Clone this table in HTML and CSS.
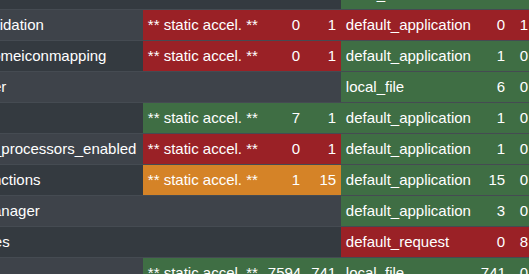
FILE: index.html
```html
<!DOCTYPE html>
<html lang="en">
<head>
<meta charset="utf-8">
<title>Caches used</title>
<link rel="stylesheet" href="styles.css">
</head>
<body>
<div class="viewport">
  <table class="cachetable">
    <colgroup>
      <col class="c-name">
      <col class="c-accel">
      <col class="c-n1">
      <col class="c-n2">
      <col class="c-store">
      <col class="c-s1">
      <col class="c-s2">
    </colgroup>
    <tbody>
      <tr>
        <td>core/config</td>
        <td></td><td></td><td></td>
        <td class="ok">local_file</td><td class="ok num">12</td><td class="ok num">0</td>
      </tr>
      <tr>
        <td>core/eventinvalidation</td>
        <td class="bad">** static accel. **</td><td class="bad num">0</td><td class="bad num">1</td>
        <td class="bad">default_application</td><td class="bad num">0</td><td class="bad num">1</td>
      </tr>
      <tr>
        <td>core/fontawesomeiconmapping</td>
        <td class="bad">** static accel. **</td><td class="bad num">0</td><td class="bad num">1</td>
        <td class="ok">default_application</td><td class="ok num">1</td><td class="ok num">0</td>
      </tr>
      <tr>
        <td>core/htmlpurifier</td>
        <td></td><td></td><td></td>
        <td class="ok">local_file</td><td class="ok num">6</td><td class="ok num">0</td>
      </tr>
      <tr>
        <td>core/langmenu</td>
        <td class="ok">** static accel. **</td><td class="ok num">7</td><td class="ok num">1</td>
        <td class="ok">default_application</td><td class="ok num">1</td><td class="ok num">0</td>
      </tr>
      <tr>
        <td>core/message_processors_enabled</td>
        <td class="bad">** static accel. **</td><td class="bad num">0</td><td class="bad num">1</td>
        <td class="ok">default_application</td><td class="ok num">1</td><td class="ok num">0</td>
      </tr>
      <tr>
        <td>core/plugin_functions</td>
        <td class="warn">** static accel. **</td><td class="warn num">1</td><td class="warn num">15</td>
        <td class="ok">default_application</td><td class="ok num">15</td><td class="ok num">0</td>
      </tr>
      <tr>
        <td>core/plugin_manager</td>
        <td></td><td></td><td></td>
        <td class="ok">default_application</td><td class="ok num">3</td><td class="ok num">0</td>
      </tr>
      <tr>
        <td>core/repositories</td>
        <td></td><td></td><td></td>
        <td class="bad">default_request</td><td class="bad num">0</td><td class="bad num">8</td>
      </tr>
      <tr>
        <td>core/string</td>
        <td class="ok">** static accel. **</td><td class="ok num">7594</td><td class="ok num">741</td>
        <td class="ok">local_file</td><td class="ok num">741</td><td class="ok num">0</td>
      </tr>
    </tbody>
  </table>
</div>
</body>
</html>
```
FILE: styles.css
```css
html, body {
  margin: 0;
  padding: 0;
  background: #343a40;
}

.viewport {
  width: 529px;
  height: 274px;
  overflow: hidden;
  background: #343a40;
}

.cachetable {
  margin-left: -106px;
  margin-top: -22px;
  width: 639px;
  table-layout: fixed;
  border-collapse: collapse;
  font-family: "Liberation Sans", Arial, sans-serif;
  font-size: 15px;
  line-height: 22px;
  color: #ffffff;
}

.c-name { width: 249px; }
.c-accel { width: 120px; }
.c-n1 { width: 42px; }
.c-n2 { width: 36px; }
.c-store { width: 135px; }
.c-s1 { width: 34px; }
.c-s2 { width: 23px; }

.cachetable td {
  padding: 4px 0.3rem;
  border-top: 1px solid #454b52;
  white-space: nowrap;
  overflow: hidden;
  background: #343a40;
}

.cachetable tr:nth-child(even) td {
  background: #3e434a;
}

.cachetable td.num {
  text-align: right;
}

.cachetable tr td.bad {
  background: #9a2126;
}

.cachetable tr td.ok {
  background: #3f6e44;
}

.cachetable tr td.warn {
  background: #d58327;
}
```
